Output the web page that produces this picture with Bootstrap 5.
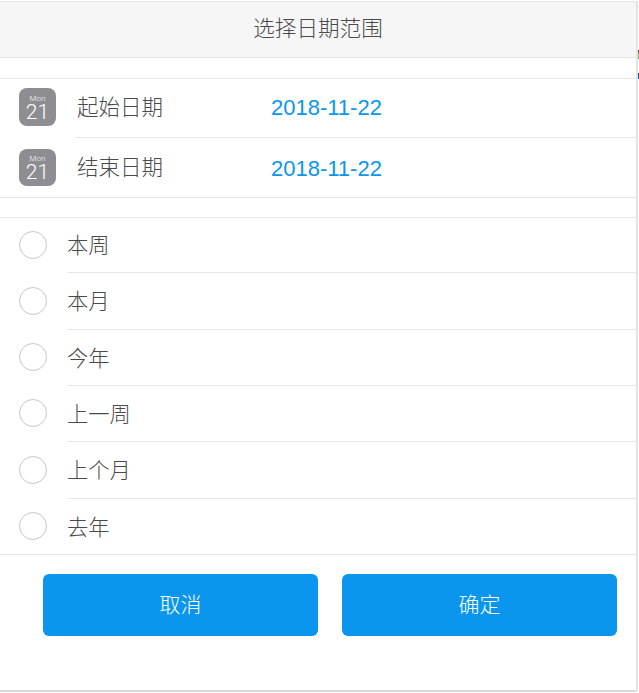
<!DOCTYPE html>
<html lang="zh">
<head>
<meta charset="utf-8">
<title>选择日期范围</title>
<link href="https://cdn.jsdelivr.net/npm/bootstrap@5.3.0/dist/css/bootstrap.min.css" rel="stylesheet">
<style>
html,body{margin:0;height:693px;overflow:hidden;background:#fff}
body{font-family:"Liberation Sans","Noto Sans CJK SC",sans-serif;color:#4a4a4a}
.sheet{width:638px;height:691px;margin-top:1px;border-top:1px solid #e6e6e6;border-right:2px solid #e4e4e4;border-bottom:2px solid #d9d9d9;border-bottom-right-radius:3px;background:#fff}
.sheet-head{height:56px;background:#f6f6f6;border-bottom:1px solid #e6e6e6;font-size:21.6px;font-weight:300;color:#4a4a4a}
.date-group{margin-top:20px;border-top:1px solid #e6e6e6;border-bottom:1px solid #e6e6e6}
.date-row{height:59px;padding-left:19px}
.date-body{height:100%;margin-left:19px;padding-left:2px}
.date-row:first-child .date-body{border-bottom:1px solid #e6e6e6}
.date-row:first-child .cal-ico{margin-bottom:3px}
.date-row:first-child .date-val{margin-bottom:2px}
.date-row:last-child .date-body{padding-top:2px}
.date-label{width:194px;font-size:21.5px;font-weight:300;color:#4a4a4a}
.date-val{font-size:22px;color:#0a96ee}
.cal-ico{width:37px;height:38px;flex:none;display:block}
.cal-bg{fill:#8e8d92}
.cal-m{font:300 8px Roboto,"Liberation Sans",sans-serif;fill:#fff;text-anchor:middle}
.cal-d{font:300 21px Roboto,"Liberation Sans",sans-serif;fill:#fff;text-anchor:middle}
.opt-group{margin-top:19px;border-top:1px solid #e6e6e6;border-bottom:1px solid #e6e6e6}
.opt-row{height:56px;padding-left:19px}
.opt-row:nth-child(1),.opt-row:nth-child(6){height:55px}
.opt-row:nth-child(2),.opt-row:nth-child(5){height:57px}
.opt-body{height:100%;margin-left:20px;padding-top:4px;font-size:21.3px;font-weight:300;color:#4a4a4a}
.opt-row:not(:last-child) .opt-body{border-bottom:1px solid #e6e6e6}
.radio-o{width:28px;height:28px;margin-bottom:2px;border:1px solid #c8c8c8;border-radius:50%;flex:none}
.act{padding:19px 19px 0 43px;gap:24px}
.btn-act{flex:1 1 0;height:62px;background:#0a96ee;border:0;border-radius:6px;color:#fff;font-size:21px;font-weight:300}
.btn-act:hover{background:#0a96ee;color:#fff}
.edge-a,.edge-b{position:absolute;left:638px;width:1px}
.edge-a{top:50px;height:9px;background:linear-gradient(#3a3040,#d8b45a 55%,#2f8fd0)}
.edge-b{top:73px;height:6px;background:linear-gradient(#3d2a4a,#1f78c8)}
</style>
</head>
<body>
<div class="sheet">
  <div class="sheet-head d-flex align-items-center justify-content-center">选择日期范围</div>
  <div class="date-group">
    <div class="date-row d-flex align-items-center">
      <svg class="cal-ico" viewBox="0 0 37 38"><rect class="cal-bg" width="37" height="38" rx="8"/><text class="cal-m" x="18.5" y="12.5">Mon</text><text class="cal-d" x="18.5" y="31">21</text></svg>
      <div class="date-body d-flex align-items-center flex-grow-1"><span class="date-label">起始日期</span><span class="date-val">2018-11-22</span></div>
    </div>
    <div class="date-row d-flex align-items-center">
      <svg class="cal-ico" viewBox="0 0 37 38"><rect class="cal-bg" width="37" height="37" rx="8"/><text class="cal-m" x="18.5" y="11.5">Mon</text><text class="cal-d" x="18.5" y="30">21</text></svg>
      <div class="date-body d-flex align-items-center flex-grow-1"><span class="date-label">结束日期</span><span class="date-val">2018-11-22</span></div>
    </div>
  </div>
  <div class="opt-group">
    <div class="opt-row d-flex align-items-center"><span class="radio-o"></span><div class="opt-body d-flex align-items-center flex-grow-1">本周</div></div>
    <div class="opt-row d-flex align-items-center"><span class="radio-o"></span><div class="opt-body d-flex align-items-center flex-grow-1">本月</div></div>
    <div class="opt-row d-flex align-items-center"><span class="radio-o"></span><div class="opt-body d-flex align-items-center flex-grow-1">今年</div></div>
    <div class="opt-row d-flex align-items-center"><span class="radio-o"></span><div class="opt-body d-flex align-items-center flex-grow-1">上一周</div></div>
    <div class="opt-row d-flex align-items-center"><span class="radio-o"></span><div class="opt-body d-flex align-items-center flex-grow-1">上个月</div></div>
    <div class="opt-row d-flex align-items-center"><span class="radio-o"></span><div class="opt-body d-flex align-items-center flex-grow-1">去年</div></div>
  </div>
  <div class="act d-flex">
    <button type="button" class="btn btn-act">取消</button>
    <button type="button" class="btn btn-act">确定</button>
  </div>
</div>
<span class="edge-a"></span><span class="edge-b"></span>
<script src="https://cdn.jsdelivr.net/npm/bootstrap@5.3.0/dist/js/bootstrap.bundle.min.js"></script>
</body>
</html>
